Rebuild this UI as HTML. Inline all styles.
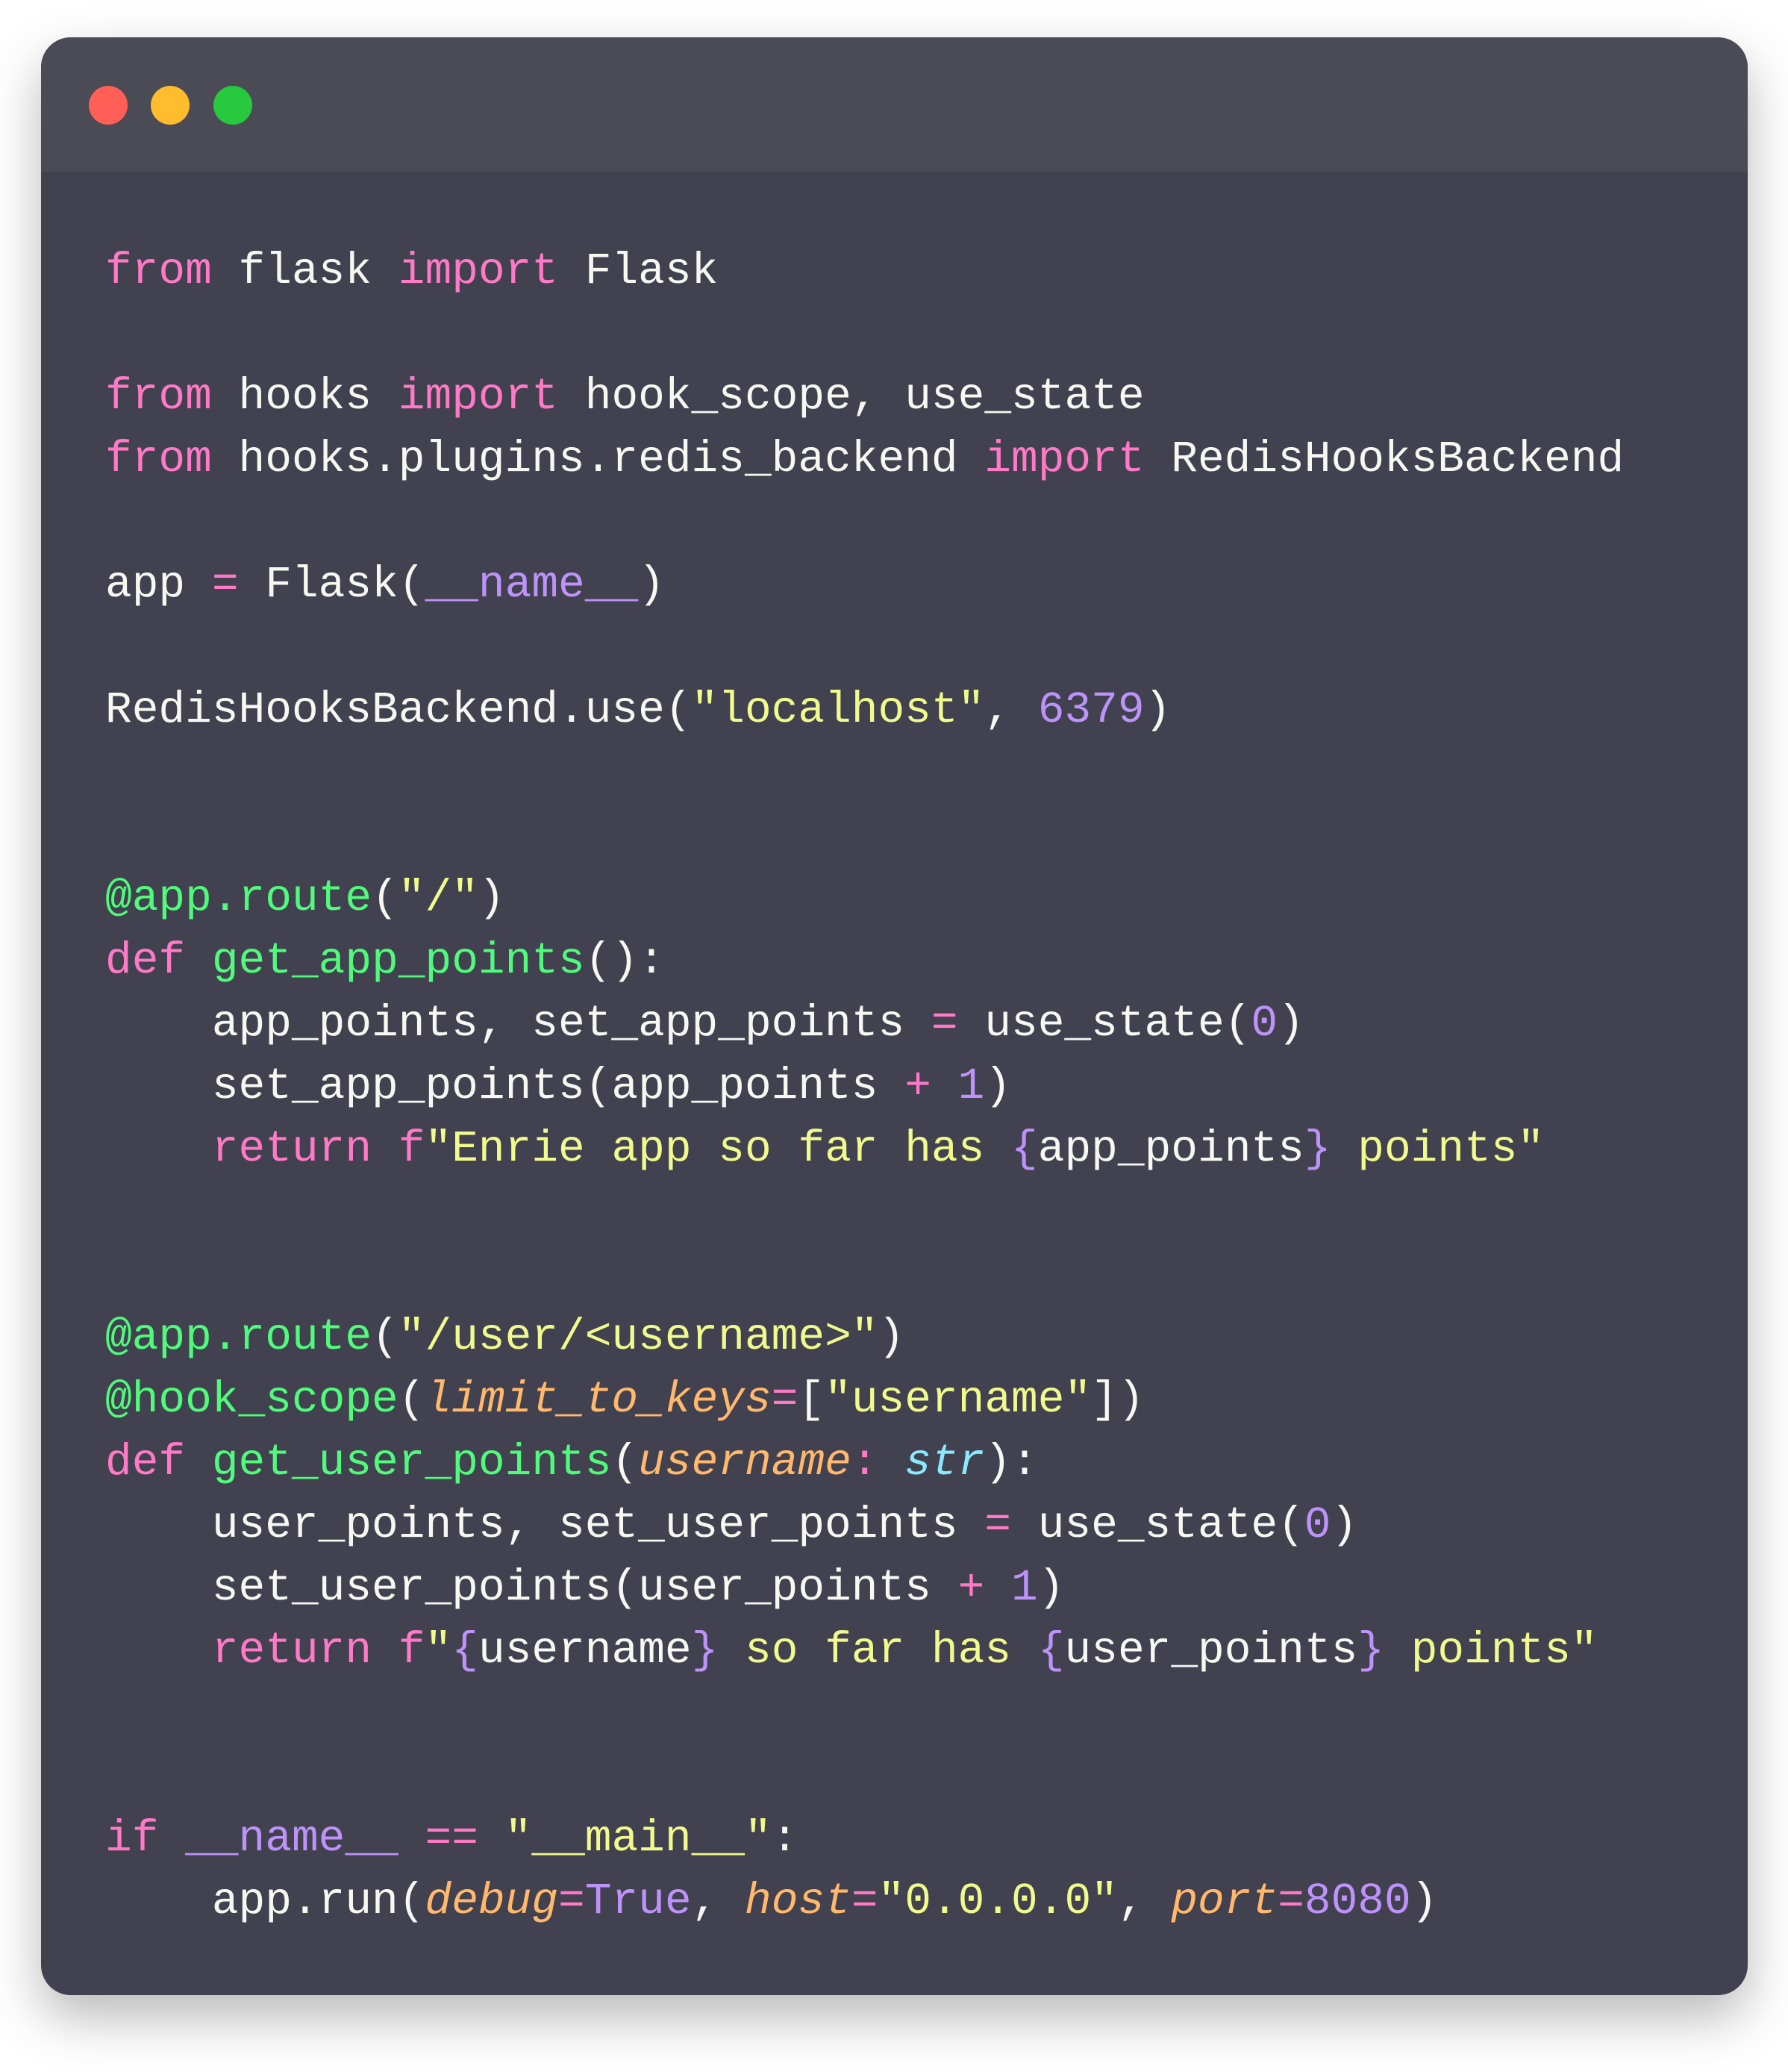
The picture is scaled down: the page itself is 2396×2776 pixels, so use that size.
<!DOCTYPE html>
<html><head><meta charset="utf-8"><style>
html,body{margin:0;padding:0;background:#fff;width:2396px;height:2776px;overflow:hidden}
.win{position:absolute;left:55px;top:50px;width:2287px;height:2623px;border-radius:40px;background:#414150;overflow:hidden;box-shadow:0 30px 70px rgba(0,0,0,0.28)}
.bar{position:absolute;left:0;top:0;width:100%;height:180px;background:#4b4b56}
.dot{position:absolute;top:65px;width:52px;height:52px;border-radius:50%}
pre{position:absolute;left:86px;top:271px;margin:0;font-family:"Liberation Mono",monospace;font-size:59.5px;line-height:84px;color:#f8f8f2}
.k{color:#ff79c6}.p{color:#bd93f9}.g{color:#50fa7b}.y{color:#f1fa8c}.o{color:#ffb86c;font-style:italic}.c{color:#8be9fd;font-style:italic}
</style></head><body>
<div class="win"><div class="bar">
<div class="dot" style="left:64px;background:#ff5f56"></div>
<div class="dot" style="left:147px;background:#ffbd2e"></div>
<div class="dot" style="left:231px;background:#27c93f"></div>
</div>
<pre><span class="k">from</span> flask <span class="k">import</span> Flask

<span class="k">from</span> hooks <span class="k">import</span> hook_scope, use_state
<span class="k">from</span> hooks.plugins.redis_backend <span class="k">import</span> RedisHooksBackend

app <span class="k">=</span> Flask(<span class="p">__name__</span>)

RedisHooksBackend.use(<span class="y">"localhost"</span>, <span class="p">6379</span>)


<span class="g">@app.route</span>(<span class="y">"/"</span>)
<span class="k">def</span> <span class="g">get_app_points</span>():
    app_points, set_app_points <span class="k">=</span> use_state(<span class="p">0</span>)
    set_app_points(app_points <span class="k">+</span> <span class="p">1</span>)
    <span class="k">return</span> <span class="k">f</span><span class="y">"Enrie app so far has </span><span class="p">{</span>app_points<span class="p">}</span><span class="y"> points"</span>


<span class="g">@app.route</span>(<span class="y">"/user/&lt;username&gt;"</span>)
<span class="g">@hook_scope</span>(<span class="o">limit_to_keys</span><span class="k">=</span>[<span class="y">"username"</span>])
<span class="k">def</span> <span class="g">get_user_points</span>(<span class="o">username</span><span class="k">:</span> <span class="c">str</span>):
    user_points, set_user_points <span class="k">=</span> use_state(<span class="p">0</span>)
    set_user_points(user_points <span class="k">+</span> <span class="p">1</span>)
    <span class="k">return</span> <span class="k">f</span><span class="y">"</span><span class="p">{</span>username<span class="p">}</span><span class="y"> so far has </span><span class="p">{</span>user_points<span class="p">}</span><span class="y"> points"</span>


<span class="k">if</span> <span class="p">__name__</span> <span class="k">==</span> <span class="y">"__main__"</span>:
    app.run(<span class="o">debug</span><span class="k">=</span><span class="p">True</span>, <span class="o">host</span><span class="k">=</span><span class="y">"0.0.0.0"</span>, <span class="o">port</span><span class="k">=</span><span class="p">8080</span>)</pre>
</div>
</body></html>
